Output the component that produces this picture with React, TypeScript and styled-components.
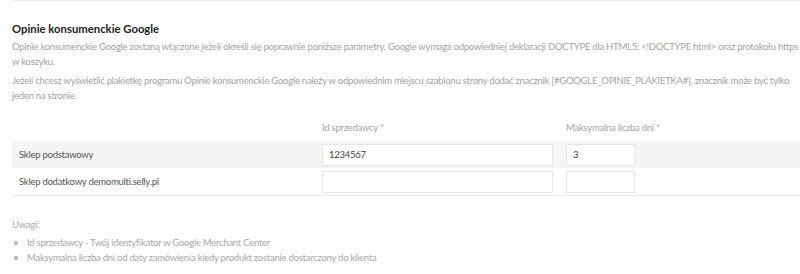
import { FC } from "react";
import styled, { createGlobalStyle } from "styled-components";

const FONT = 'Lato, "Liberation Sans", sans-serif'

const GlobalStyle = createGlobalStyle`
	html, body {
		margin: 0;
		padding: 0;
		background: #fff;
	}
	body {
		font-family: ${FONT};
		font-size: 9.5px;
		letter-spacing: -0.25px;
	}
`

interface IShopRow {
	name: string;
	merchantId: string;
	maxDays: string;
}

const rows: IShopRow[] = [
	{ name: 'Sklep podstawowy', merchantId: '1234567', maxDays: '3' },
	{ name: 'Sklep dodatkowy demomulti.selly.pl', merchantId: '', maxDays: '' },
]

const notes = [
	'Id sprzedawcy - Twój identyfikator w Google Merchant Center',
	'Maksymalna liczba dni od daty zamówienia kiedy produkt zostanie dostarczony do klienta',
]

const App: FC = () => (
	<>
		<GlobalStyle />
		<SWrapper>
			<SSection>
				<STitle>Opinie konsumenckie Google</STitle>
				<SText>
					Opinie konsumenckie Google zostaną włączone jeżeli określi się poprawnie poniższe parametry. Google wymaga odpowiedniej deklaracji DOCTYPE dla HTML5: &lt;!DOCTYPE html&gt; oraz protokołu https w koszyku.
				</SText>
				<SText>
					Jeżeli chcesz wyświetlić plakietkę programu Opinie konsumenckie Google należy w odpowiednim miejscu szablonu strony dodać znacznik [#GOOGLE_OPINIE_PLAKIETKA#], znacznik może być tylko jeden na stronie.
				</SText>
			</SSection>

			<STable>
				<SHeadRow>
					<SHeadCell />
					<SHeadCell>Id sprzedawcy *</SHeadCell>
					<SHeadCell>Maksymalna liczba dni *</SHeadCell>
				</SHeadRow>
				{rows.map((row, idx) => (
					<SRow key={row.name} isShaded={idx % 2 === 0}>
						<SLabel>{row.name}</SLabel>
						<SCell><SInput width={231} defaultValue={row.merchantId} /></SCell>
						<SCell><SInput width={69} defaultValue={row.maxDays} /></SCell>
					</SRow>
				))}
			</STable>

			<SNotes>
				<SNotesTitle>Uwagi:</SNotesTitle>
				<SList>
					{notes.map((note) => (
						<SListItem key={note}>{note}</SListItem>
					))}
				</SList>
			</SNotes>
		</SWrapper>
	</>
)

export default App

const SWrapper = styled.div`
	padding-left: 12px;
	width: 788px;
`

const SSection = styled.div`
	border-top: 1px solid #ececec;
	padding-top: 20px;
`

const STitle = styled.div`
	font-size: 11.3px;
	font-weight: 700;
	letter-spacing: 0;
	color: #222;
	line-height: 16px;
	margin-bottom: 2px;
`

const SText = styled.p`
	margin: 0 0 4px;
	line-height: 15px;
	color: #a3a3a3;
`

const STable = styled.div`
	margin-top: 11px;
	display: grid;
	grid-template-columns: 310px 244px 1fr;
	border-bottom: 1px solid #ececec;
`

const SHeadRow = styled.div`
	display: contents;
`

const SHeadCell = styled.div`
	height: 27px;
	display: flex;
	align-items: center;
	color: #a3a3a3;
`

const SRow = styled.div<{ isShaded: boolean }>`
	display: contents;

	& > * {
		background: ${({ isShaded }) => isShaded ? '#f5f5f5' : '#fff'};
		height: 27px;
	}
`

const SLabel = styled.div`
	display: flex;
	align-items: center;
	padding-left: 7px;
	color: #555;
`

const SCell = styled.div`
	display: flex;
	align-items: center;
`

const SInput = styled.input<{ width: number }>`
	box-sizing: border-box;
	width: ${({ width }) => width}px;
	height: 22px;
	margin: 0;
	border: 1px solid #e6e6e6;
	background: #fff;
	padding: 0 6px;
	font-family: ${FONT};
	font-size: 9.5px;
	letter-spacing: -0.25px;
	color: #444;
	outline: none;
`

const SNotes = styled.div`
	margin-top: 21px;
`

const SNotesTitle = styled.div`
	color: #a8a8a8;
	line-height: 16px;
	margin-bottom: 2px;
`

const SList = styled.ul`
	margin: 0;
	padding: 0;
	list-style: none;
`

const SListItem = styled.li`
	position: relative;
	padding-left: 15px;
	line-height: 15px;
	color: #a8a8a8;

	&::before {
		content: '';
		position: absolute;
		left: 2px;
		top: 6px;
		width: 4px;
		height: 4px;
		background: #c0c0c0;
	}
`
